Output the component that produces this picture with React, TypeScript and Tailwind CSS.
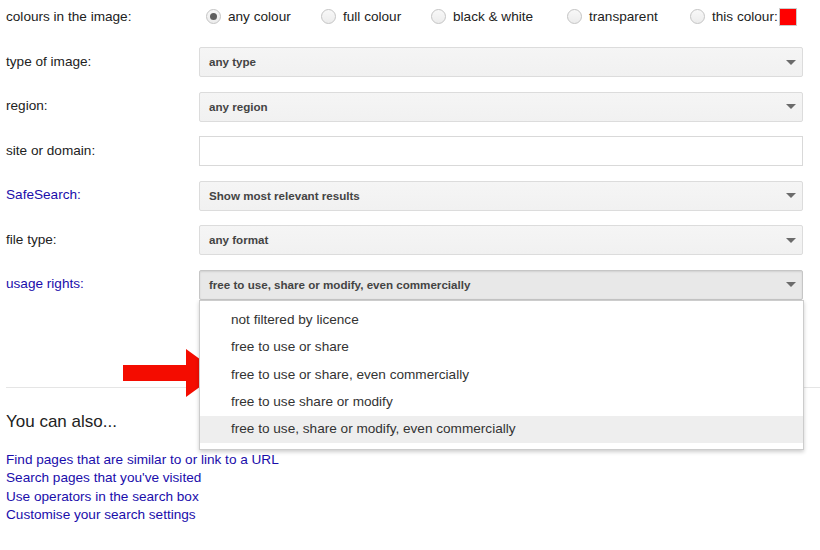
import { FC } from "react";

const font = { fontFamily: '"Liberation Sans", Arial, sans-serif' };

const Radio: FC<{ checked?: boolean; label: string }> = ({ checked, label }) => (
  <label className="flex items-center gap-[7px] text-[13.6px] text-[#222]">
    <span className="flex h-[15px] w-[15px] items-center justify-center rounded-full border border-[#c4c4c4] bg-gradient-to-b from-[#f8f8f8] to-[#ececec]">
      {checked && <span className="h-[7px] w-[7px] rounded-full bg-[#5f5f5f]" />}
    </span>
    {label}
  </label>
);

const Caret: FC = () => (
  <svg width="10" height="5" viewBox="0 0 10 5" className="mr-[4px]">
    <path d="M0 0 L10 0 L5 5 Z" fill="#6b6b6b" />
  </svg>
);

const Select: FC<{ value: string; active?: boolean }> = ({ value, active }) => (
  <div
    className={
      active
        ? "flex h-[30px] flex-1 items-center justify-between rounded-[2px] border border-[#c6c6c6] bg-[#e8e8e8] pl-[9px] pr-[2px] shadow-[inset_0_1px_2px_rgba(0,0,0,0.1)]"
        : "flex h-[30px] flex-1 items-center justify-between rounded-[2px] border border-[#dcdcdc] bg-gradient-to-b from-[#f5f5f5] to-[#f1f1f1] pl-[9px] pr-[2px]"
    }
  >
    <span className="text-[11.6px] font-bold text-[#444]">{value}</span>
    <Caret />
  </div>
);

const Row: FC<{ label: string; link?: boolean; children: React.ReactNode }> = ({
  label,
  link,
  children,
}) => (
  <div className="flex items-center">
    <div
      className={
        link
          ? "w-[193px] text-[13.6px] text-[#1a0dab]"
          : "w-[193px] text-[13.6px] text-[#222]"
      }
    >
      {label}
    </div>
    {children}
  </div>
);

const options = [
  "not filtered by licence",
  "free to use or share",
  "free to use or share, even commercially",
  "free to use share or modify",
  "free to use, share or modify, even commercially",
];

const links = [
  "Find pages that are similar to or link to a URL",
  "Search pages that you've visited",
  "Use operators in the search box",
  "Customise your search settings",
];

const App: FC = () => {
  return (
    <div className="relative h-[550px] w-[820px] overflow-hidden bg-white" style={font}>
      <div className="pl-[6px] pr-[17px]">
        <Row label="colours in the image:">
          <div className="flex h-[34px] flex-1 items-center">
            <div className="ml-[7px] w-[115px]">
              <Radio checked label="any colour" />
            </div>
            <div className="w-[110px]">
              <Radio label="full colour" />
            </div>
            <div className="w-[136px]">
              <Radio label="black & white" />
            </div>
            <div className="w-[123px]">
              <Radio label="transparent" />
            </div>
            <div className="flex items-center">
              <Radio label="this colour:" />
              <span className="ml-[1px] h-[18px] w-[18px] border border-[#ccc] bg-[#ff0000]" />
            </div>
          </div>
        </Row>

        <div className="mt-[13px] flex flex-col gap-[14.5px]">
          <Row label="type of image:">
            <Select value="any type" />
          </Row>
          <Row label="region:">
            <Select value="any region" />
          </Row>
          <Row label="site or domain:">
            <div className="h-[30px] flex-1 border border-[#d9d9d9] bg-white" />
          </Row>
          <Row label="SafeSearch:" link>
            <Select value="Show most relevant results" />
          </Row>
          <Row label="file type:">
            <Select value="any format" />
          </Row>
          <Row label="usage rights:" link>
            <div className="relative flex flex-1">
              <Select value="free to use, share or modify, even commercially" active />
              <div className="absolute left-0 right-[-1px] top-[30px] z-10 border border-[#ccc] bg-white py-[6px] shadow-[0_2px_4px_rgba(0,0,0,0.2)]">
                {options.map((o, i) => (
                  <div
                    key={o}
                    className={
                      i === options.length - 1
                        ? "flex h-[27.3px] items-center bg-[#eeeeee] pl-[31px] text-[13.6px] text-[#333]"
                        : "flex h-[27.3px] items-center pl-[31px] text-[13.6px] text-[#333]"
                    }
                  >
                    {o}
                  </div>
                ))}
              </div>
            </div>
          </Row>
        </div>
      </div>

      <div className="ml-[6px] mt-[87px] border-t border-[#e5e5e5]" />

      <div className="pl-[6px]">
        <h3 className="mt-[24px] text-[17px] leading-[20px] text-[#222]">You can also...</h3>
        <ul className="mt-[19px] flex flex-col">
          {links.map((l) => (
            <li key={l} className="text-[13.6px] leading-[18.6px] text-[#1a0dab]">
              {l}
            </li>
          ))}
        </ul>
      </div>

      <svg
        className="absolute left-[123px] top-[349px]"
        width="97"
        height="48"
        viewBox="0 0 97 48"
      >
        <path d="M0 16 L63 16 L63 0 L96 24 L63 48 L63 32 L0 32 Z" fill="#f40c00" />
      </svg>
    </div>
  );
};

export default App;
